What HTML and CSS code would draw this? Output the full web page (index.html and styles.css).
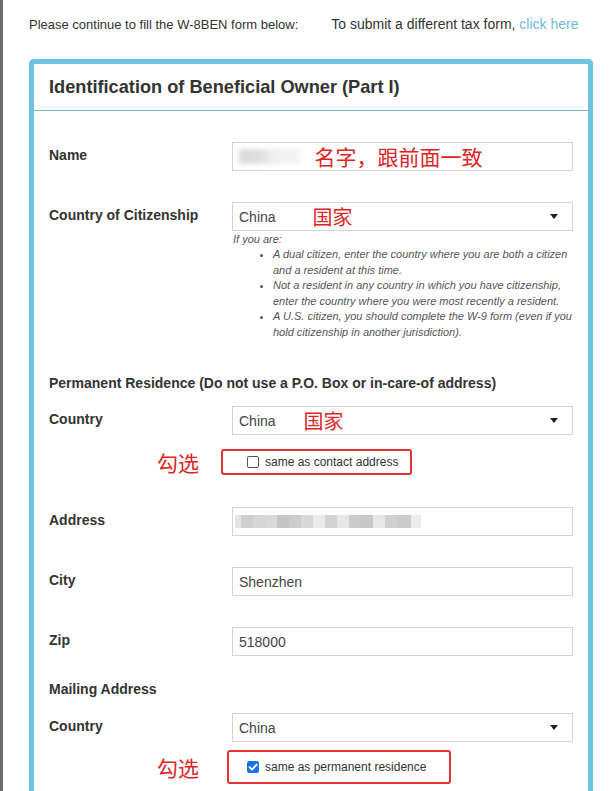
FILE: index.html
```html
<!DOCTYPE html>
<html lang="en">
<head>
<meta charset="utf-8">
<title>W-8BEN</title>
<link rel="stylesheet" href="styles.css">
</head>
<body>
<div class="page">
  <p class="intro">Please continue to fill the W-8BEN form below:<span class="intro-gap">To submit a different tax form, <a class="link" href="#">click here</a></span></p>

  <section class="card">
    <header class="card-head">
      <h2 class="card-title">Identification of Beneficial Owner (Part I)</h2>
    </header>
    <div class="card-body">
      <div class="row row-name">
        <div class="label">Name</div>
        <div class="field">
          <span class="blur-name"></span><span class="dots">...</span><span class="note note-name">名字，跟前面一致</span>
        </div>
      </div>

      <div class="row row-cit">
        <div class="label">Country of Citizenship</div>
        <div>
          <div class="field select">
            <span class="val">China</span><span class="note note-cit">国家</span><span class="caret"></span>
          </div>
          <div class="help">
            <p class="help-lead">If you are:</p>
            <ul class="help-list">
              <li>A dual citizen, enter the country where you are both a citizen and a resident at this time.</li>
              <li>Not a resident in any country in which you have citizenship, enter the country where you were most recently a resident.</li>
              <li>A U.S. citizen, you should complete the W-9 form (even if you hold citizenship in another jurisdiction).</li>
            </ul>
          </div>
        </div>
      </div>

      <h3 class="section section-perm">Permanent Residence (Do not use a P.O. Box or in-care-of address)</h3>

      <div class="row row-country">
        <div class="label">Country</div>
        <div class="field select">
          <span class="val">China</span><span class="note note-cty">国家</span><span class="caret"></span>
        </div>
      </div>

      <div class="check-row check-row-1">
        <div class="tick-note">勾选</div>
        <div class="redbox redbox-1">
          <span class="box"></span><span class="check-label">same as contact address</span>
        </div>
      </div>

      <div class="row row-addr">
        <div class="label">Address</div>
        <div class="field">
          <span class="mosaic">
            <i></i><i></i><i></i><i></i><i></i><i></i><i></i><i></i><i></i><i></i><i></i><i></i><i></i><i></i><i></i><i></i>
          </span>
        </div>
      </div>

      <div class="row">
        <div class="label">City</div>
        <div class="field"><span class="val">Shenzhen</span></div>
      </div>

      <div class="row row-zip">
        <div class="label">Zip</div>
        <div class="field"><span class="val">518000</span></div>
      </div>

      <h3 class="section section-mail">Mailing Address</h3>

      <div class="row row-country2">
        <div class="label">Country</div>
        <div class="field select">
          <span class="val">China</span><span class="caret"></span>
        </div>
      </div>

      <div class="check-row check-row-2">
        <div class="tick-note">勾选</div>
        <div class="redbox redbox-2">
          <span class="box box-checked"><svg viewBox="0 0 12 12" width="12" height="12"><path d="M2.6 6.2 L5 8.6 L9.6 3.6" fill="none" stroke="#fff" stroke-width="1.9" stroke-linecap="round" stroke-linejoin="round"/></svg></span><span class="check-label">same as permanent residence</span>
        </div>
      </div>
    </div>
  </section>
</div>
</body>
</html>
```

FILE: styles.css
```css
* { box-sizing: border-box; }

html, body {
  margin: 0;
  padding: 0;
  background: #fff;
}

body {
  font-family: "Liberation Sans", Arial, sans-serif;
  color: #333;
  overflow: hidden;
}

.page {
  border-left: 3px solid #6a6a6a;
  min-height: 791px;
  padding: 15px 0 0 26px;
}

.intro {
  margin: 0;
  height: 18px;
  font-size: 13px;
  line-height: 18px;
  color: #333;
}

.intro-gap {
  margin-left: 33px;
  font-size: 14px;
}

.link {
  color: #6dbbdc;
  text-decoration: none;
}

.card {
  margin-top: 26px;
  width: 564px;
  border: 5px solid #6cc4e2;
  border-bottom: none;
  border-radius: 5px 5px 0 0;
  background: #fff;
  min-height: 740px;
}

.card-head {
  height: 47px;
  border-bottom: 1px solid #7cbad6;
  padding: 0 15px;
  display: flex;
  align-items: center;
}

.card-title {
  margin: 0;
  font-size: 18.2px;
  line-height: 22px;
  font-weight: bold;
  color: #333;
}

.card-body {
  padding: 31px 15px 0 15px;
}

.row {
  display: grid;
  grid-template-columns: 183px 341px;
  align-items: start;
  margin-bottom: 31px;
}

.label {
  font-size: 14px;
  font-weight: bold;
  line-height: 27px;
  color: #333;
}

.field {
  height: 29px;
  border: 1px solid #d4d4d4;
  background: #fff;
  display: flex;
  align-items: center;
  padding: 0 6px;
}

.val {
  font-size: 14px;
  color: #444;
}

.select .caret {
  margin-left: auto;
  margin-right: 8px;
  width: 0;
  height: 0;
  border-left: 4px solid transparent;
  border-right: 4px solid transparent;
  border-top: 5px solid #222;
}

.note {
  font-family: "Noto Sans CJK SC", "Noto Sans CJK JP", sans-serif;
  font-size: 20px;
  line-height: 1;
  color: #e02424;
}

.note-name { margin-left: 20px; font-size: 21px; }
.note-cit { margin-left: 37px; }
.note-cty { margin-left: 28px; }

.blur-name {
  width: 62px;
  height: 15px;
  margin-left: 0;
  background: linear-gradient(to right, #d8d8d8 0%, #dedede 35%, #efefef 55%, #f4f4f4 100%);
  filter: blur(2.5px);
}

.dots {
  font-size: 9px;
  color: #777;
  margin-left: -14px;
}

.row-cit { margin-bottom: 0; }

.help {
  color: #555;
  font-style: italic;
  font-size: 11px;
  margin-right: -4px;
}

.help-lead {
  margin: 0 0 0 1px;
  line-height: 16px;
}

.help-list {
  margin: 0;
  padding-left: 41px;
  line-height: 15.5px;
}

.section {
  margin: 0;
  font-size: 14px;
  font-weight: bold;
  line-height: 20px;
  color: #333;
}

.section-perm { margin-top: 33px; margin-bottom: 13px; }

.row-country { margin-bottom: 14px; }

.check-row {
  display: grid;
  grid-template-columns: 183px auto;
  align-items: center;
  justify-items: start;
}

.tick-note {
  justify-self: end;
  margin-right: 33px;
  font-family: "Noto Sans CJK SC", "Noto Sans CJK JP", sans-serif;
  font-size: 21px;
  line-height: 1;
  color: #e02424;
}

.redbox {
  border: 2px solid #e23333;
  border-radius: 3px;
  display: flex;
  align-items: center;
}

.redbox-1 {
  margin-left: -11px;
  width: 191px;
  height: 26px;
  padding-left: 24px;
}

.redbox-2 {
  margin-left: -5px;
  width: 224px;
  height: 34px;
  padding-left: 18px;
}

.check-row-1 { margin-bottom: 32px; }
.check-row-2 { margin-top: 8px; }

.box {
  width: 12px;
  height: 12px;
  border: 1px solid #555;
  border-radius: 2px;
  background: #fff;
  flex: none;
  display: flex;
}

.box-checked {
  background: #1a73e8;
  border-color: #1a73e8;
}

.box-checked svg { display: block; margin: -1px; }

.check-label {
  margin-left: 6px;
  font-size: 12px;
  color: #333;
}

.mosaic {
  display: flex;
  height: 13px;
  margin-left: -4px;
}

.mosaic i {
  display: block;
  width: 12px;
  height: 13px;
  background: #d2d2d2;
}

.mosaic i:nth-child(1) { width: 6px; background: #e4e4e4; }
.mosaic i:nth-child(2) { background: #cfcfcf; }
.mosaic i:nth-child(3) { background: #d6d6d6; }
.mosaic i:nth-child(4) { background: #dadada; }
.mosaic i:nth-child(5) { background: #c4c4c4; }
.mosaic i:nth-child(6) { background: #cdcdcd; }
.mosaic i:nth-child(7) { background: #d9d9d9; }
.mosaic i:nth-child(8) { background: #ebebeb; }
.mosaic i:nth-child(9) { background: #d2d2d2; }
.mosaic i:nth-child(10) { background: #e6e6e6; }
.mosaic i:nth-child(11) { background: #cbcbcb; }
.mosaic i:nth-child(12) { background: #c8c8c8; }
.mosaic i:nth-child(13) { background: #e8e8e8; }
.mosaic i:nth-child(14) { background: #d0d0d0; }
.mosaic i:nth-child(15) { background: #cccccc; width: 14px; }
.mosaic i:nth-child(16) { background: #ececec; width: 10px; }

.row-zip { margin-bottom: 23px; }

.section-mail { margin-bottom: 14px; }

.row-country2 { margin-bottom: 0; }
```
